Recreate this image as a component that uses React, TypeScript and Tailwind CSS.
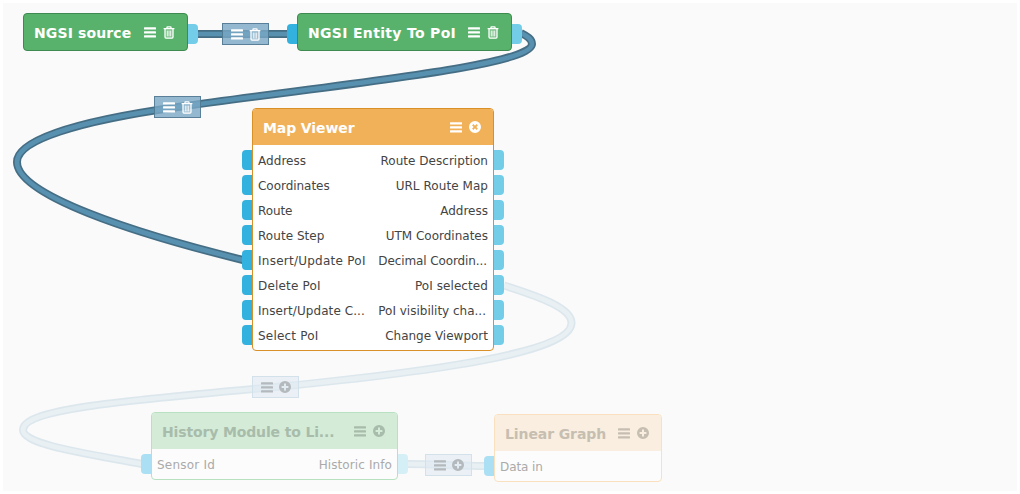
import type { ReactNode } from "react";

type IconName = "trash" | "close" | "plus";

function MenuIcon() {
  return (
    <svg width="12" height="11" viewBox="0 0 12 11" fill="currentColor">
      <rect x="0" y="0.2" width="12" height="2.4" rx="0.5" />
      <rect x="0" y="4.2" width="12" height="2.4" rx="0.5" />
      <rect x="0" y="8.2" width="12" height="2.4" rx="0.5" />
    </svg>
  );
}

function ActionIcon({ name }: { name: IconName }) {
  if (name === "trash") {
    return (
      <svg width="12" height="13" viewBox="0 0 12 13" fill="none" stroke="currentColor">
        <path d="M2 3v8.2q0 1.2 1 1.2h6q1 0 1-1.2V3Z" fill="currentColor" fillOpacity="0.2" stroke="none" />
        <path d="M4 2.2V1.3q0-.5.5-.5h3q.5 0 .5.5v.9M0.6 2.6h10.8M2 3v8.1q0 1.1 1 1.1h6q1 0 1-1.1V3" strokeWidth="1.3" />
        <path d="M4.3 4.6v5.8M6 4.6v5.8M7.7 4.6v5.8" strokeWidth="0.9" />
      </svg>
    );
  }
  return (
    <svg width="12" height="12" viewBox="0 0 12 12">
      {name === "close" ? (
        <path fill="currentColor" fillRule="evenodd" d="M6 0a6 6 0 1 0 0 12A6 6 0 0 0 6 0ZM4.4 3.1 6 4.7l1.6-1.6 1.3 1.3L7.3 6l1.6 1.6-1.3 1.3L6 7.3 4.4 8.9 3.1 7.6 4.7 6 3.1 4.4Z" />
      ) : (
        <path fill="currentColor" fillRule="evenodd" d="M6 0a6 6 0 1 0 0 12A6 6 0 0 0 6 0ZM5 2.6h2V5h2.4v2H7v2.4H5V7H2.6V5H5Z" />
      )}
    </svg>
  );
}

function InPort({ color = "bg-[#33b1df]" }: { color?: string }) {
  return <span className={`-ml-[11px] mr-[6px] h-5 w-[10px] shrink-0 rounded-l-[4px] ${color}`} />;
}

function OutPort({ color = "bg-[#73cde8]" }: { color?: string }) {
  return <span className={`-mr-[11px] ml-[6px] h-5 w-[10px] shrink-0 rounded-r-[4px] ${color}`} />;
}

function Node({ className, header = "", title, titleClass, icon, iconClass, before, after, children }: {
  className: string; header?: string; title: string; titleClass: string; icon: IconName; iconClass: string;
  before?: ReactNode; after?: ReactNode; children?: ReactNode;
}) {
  return (
    <section className={`absolute flex flex-col rounded-[4px] border ${className}`}>
      <header className={`flex h-9 shrink-0 items-center ${header}`}>
        {before}
        <h2 className={`whitespace-nowrap pt-[2px] text-[14px] font-bold leading-5 ${titleClass}`}>{title}</h2>
        <span className={`ml-auto flex items-center gap-[7px] ${iconClass}`}>
          <MenuIcon />
          <ActionIcon name={icon} />
        </span>
        {after}
      </header>
      {children}
    </section>
  );
}

function Connector({ className, icon }: { className: string; icon: IconName }) {
  return (
    <div className={`absolute flex h-[22px] w-[47px] items-center justify-center gap-[6px] border pl-px ${className}`}>
      <MenuIcon />
      <ActionIcon name={icon} />
    </div>
  );
}

const wires = [
  { d: "M198 34H288", active: true },
  { d: "M521 33C527 36 532 39 532 44C532 66 340 84 178 107C78 121 17 140 17 162C17 195 133 233 243 260", active: true },
  { d: "M504 285.5C540 297 571.5 308 571.5 323C571.5 352 440 371 275.5 387C120 401 23 409 23 430C23 445 90 454 142 464", active: false },
  { d: "M407 464C435 464 460 466 485 466", active: false },
];

const rows = [
  { input: "Address", inClass: "tracking-[0.05px]", output: "Route Description", outClass: "tracking-[0.03px]" },
  { input: "Coordinates", inClass: "tracking-[-0.04px]", output: "URL Route Map", outClass: "tracking-[0.06px]" },
  { input: "Route", inClass: "tracking-[-0.1px]", output: "Address", outClass: "tracking-[0px]" },
  { input: "Route Step", inClass: "tracking-[0.05px]", output: "UTM Coordinates", outClass: "tracking-[0px]" },
  { input: "Insert/Update PoI", inClass: "tracking-[0.25px]", output: "Decimal Coordin...", outClass: "tracking-[-0.1px] pr-[1px]" },
  { input: "Delete PoI", inClass: "tracking-[0.17px]", output: "PoI selected", outClass: "tracking-[0.08px]" },
  { input: "Insert/Update C...", inClass: "tracking-[0.07px]", output: "PoI visibility cha...", outClass: "tracking-[0px] pr-[2px]" },
  { input: "Select PoI", inClass: "tracking-[0.2px]", output: "Change Viewport", outClass: "tracking-[0px]" },
];

export default function App() {
  return (
    <main className="h-[494px] w-[1020px] overflow-hidden bg-white font-['DejaVu_Sans',sans-serif]">
      <div className="relative h-full border-[3px] border-white bg-[#fafafa]">
        <div className="absolute -inset-[3px]">
          <svg className="absolute inset-0" width="1020" height="494" fill="none">
            {wires.map((w) => (
              <g key={w.d}>
                <path d={w.d} stroke={w.active ? "#456e85" : "#dce7ed"} strokeWidth="8" />
                <path d={w.d} stroke={w.active ? "#5890b0" : "#e9f0f4"} strokeWidth="4.6" />
              </g>
            ))}
          </svg>

          <Connector className="left-[222px] top-[23px] border-[#456e85bf] bg-[#79a8c4cc] text-white" icon="trash" />
          <Connector className="left-[154px] top-[96px] border-[#456e85bf] bg-[#79a8c4cc] text-white" icon="trash" />
          <Connector className="left-[252px] top-[376px] border-[#d3e2ea] bg-[#dfeaf199] text-[#b3b9bc]" icon="plus" />
          <Connector className="left-[425px] top-[454px] border-[#d3e2ea] bg-[#dfeaf199] text-[#b3b9bc]" icon="plus" />

          <Node
            className="left-[23px] top-[13px] h-[38px] w-[165px] border-[#3f8a50] bg-[#59b26b]"
            title="NGSI source"
            titleClass="ml-[10px] tracking-[0.13px] text-white"
            icon="trash"
            iconClass="mr-[7px] text-white"
            after={<span className="flex pt-[4px]"><OutPort /></span>}
          />
          <Node
            className="left-[297px] top-[13px] h-[38px] w-[215px] border-[#3f8a50] bg-[#59b26b]"
            title="NGSI Entity To PoI"
            titleClass="ml-[5px] tracking-[0.32px] text-white"
            icon="trash"
            iconClass="mr-[7px] text-white"
            before={<span className="flex pt-[4px]"><InPort /></span>}
            after={<span className="flex pt-[4px]"><OutPort /></span>}
          />

          <Node className="left-[252px] top-[108px] h-[243px] w-[242px] border-[#d99028] bg-white" header="rounded-t-[3px] bg-[#f1b158]" title="Map Viewer" titleClass="ml-[10px] tracking-[-0.1px] text-white" icon="close" iconClass="mr-3 text-white">
            <div className="flex flex-col gap-[5px] pt-[5px] text-[12px] leading-[22px] text-[#444]">
              {rows.map((row) => (
                <div key={row.input} className="flex h-5 whitespace-nowrap">
                  <InPort />
                  <span className={row.inClass}>{row.input}</span>
                  <span className={`ml-auto ${row.outClass}`}>{row.output}</span>
                  <OutPort />
                </div>
              ))}
            </div>
          </Node>

          <Node className="left-[151px] top-[412px] h-[68px] w-[247px] border-[#b8e1c1] bg-[#fcfcfc]" header="rounded-t-[3px] bg-[#d4ebd7]" title="History Module to Li..." titleClass="ml-[10px] tracking-[-0.14px] text-[#a8bcab]" icon="plus" iconClass="mr-3 text-[#a8bcab]">
            <div className="flex whitespace-nowrap pt-[5px] text-[12px] leading-[22px] text-[#aaa]">
              <InPort color="bg-[#abdff3]" />
              <span className="h-5 tracking-[0.23px]">Sensor Id</span>
              <span className="ml-auto h-5 tracking-[0.1px]">Historic Info</span>
              <OutPort color="bg-[#d5eff6]" />
            </div>
          </Node>
          <Node className="left-[494px] top-[414px] h-[68px] w-[168px] border-[#fae0be] bg-[#fcfcfc]" header="rounded-t-[3px] bg-[#f9eee0]" title="Linear Graph" titleClass="ml-[10px] tracking-[-0.1px] text-[#c7beb2]" icon="plus" iconClass="mr-3 text-[#c7beb2]">
            <div className="flex whitespace-nowrap pt-[5px] text-[12px] leading-[22px] text-[#aaa]">
              <InPort color="bg-[#abdff3]" />
              <span className="h-5 tracking-[-0.1px]">Data in</span>
            </div>
          </Node>
        </div>
      </div>
    </main>
  );
}
